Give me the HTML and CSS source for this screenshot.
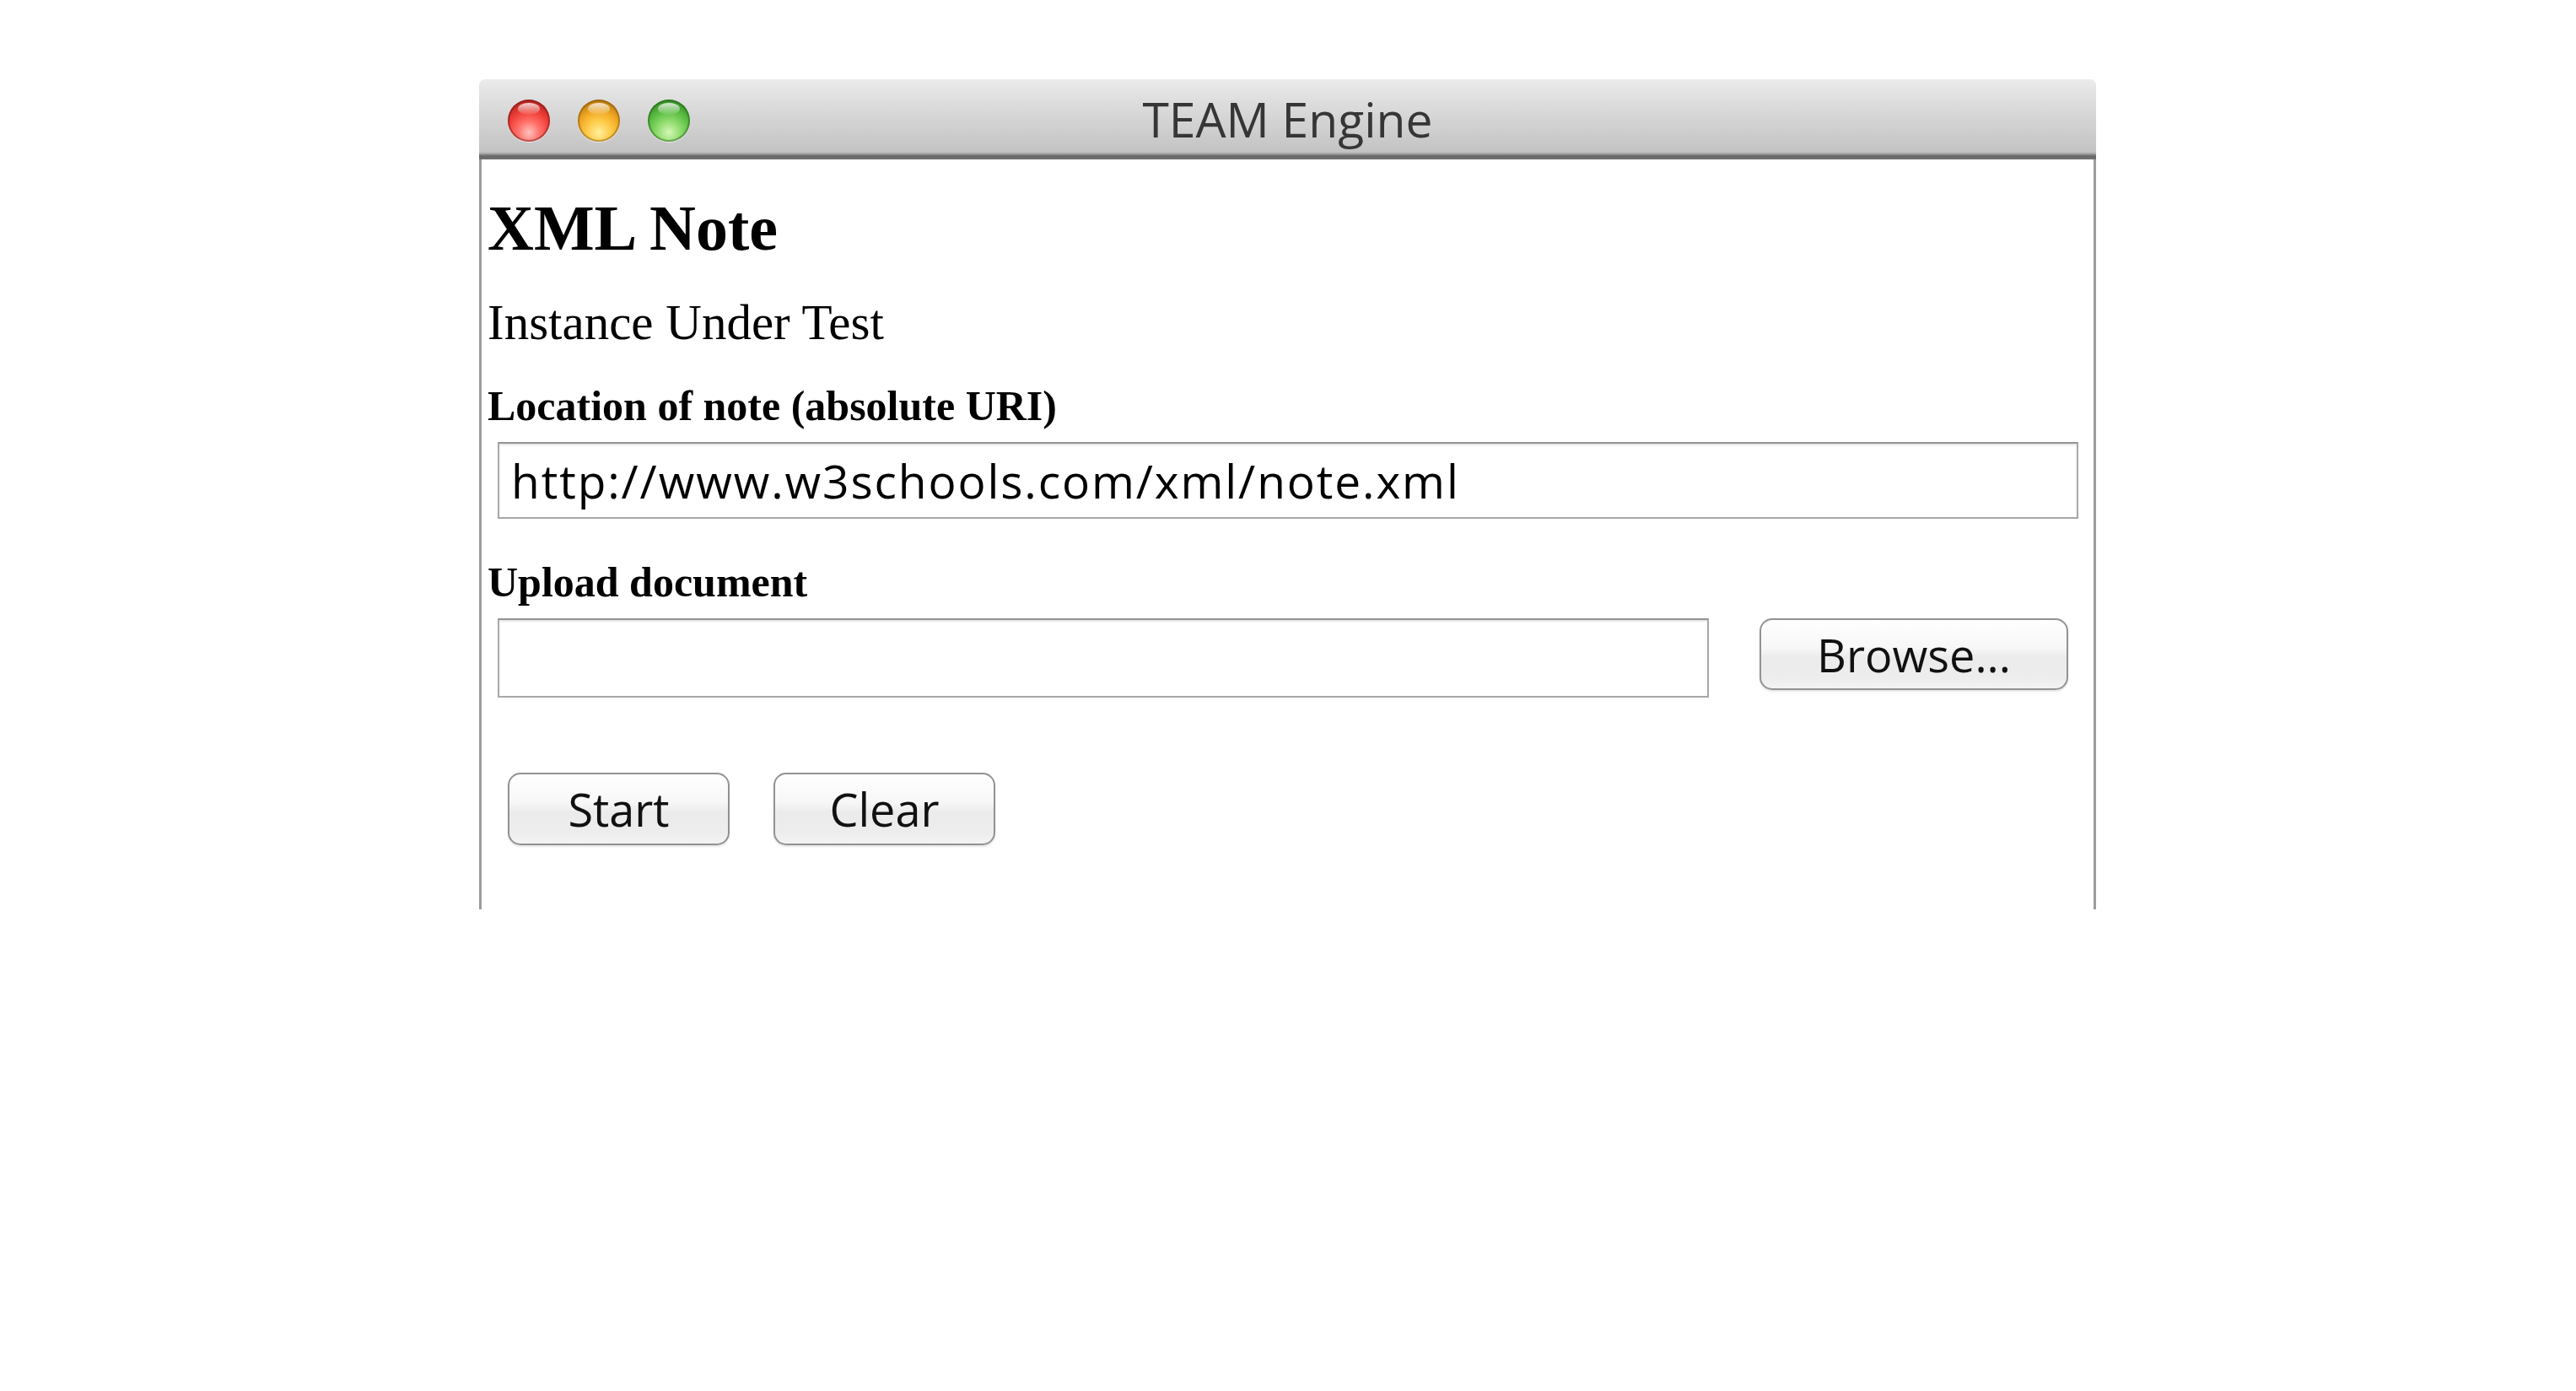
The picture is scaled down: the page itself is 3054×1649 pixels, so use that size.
FILE: index.html
```html
<!DOCTYPE html>
<html lang="en">
<head>
<meta charset="utf-8">
<title>TEAM Engine</title>
<link rel="stylesheet" href="styles.css">
</head>
<body>
<div class="window">
  <div class="titlebar">
    <div class="lights">
      <span class="light red"></span>
      <span class="light yellow"></span>
      <span class="light green"></span>
    </div>
    <div class="title">TEAM Engine</div>
    <div class="spacer"></div>
  </div>
  <div class="content">
    <h1 class="heading">XML Note</h1>
    <p class="subtitle">Instance Under Test</p>
    <form class="form">
      <label class="field-label" for="uri">Location of note (absolute URI)</label>
      <input id="uri" class="text-input uri-input" type="text" value="http://www.w3schools.com/xml/note.xml">
      <label class="field-label upload-label" for="doc">Upload document</label>
      <div class="upload-row">
        <input id="doc" class="text-input doc-input" type="text">
        <button type="button" class="mac-btn browse-btn">Browse...</button>
      </div>
      <div class="actions">
        <button type="button" class="mac-btn action-btn">Start</button>
        <button type="button" class="mac-btn action-btn">Clear</button>
      </div>
    </form>
  </div>
</div>
</body>
</html>
```
FILE: styles.css
```css
html, body {
  margin: 0;
  padding: 0;
  background: #ffffff;
}

body {
  padding: 94px 0 0 568px;
  font-family: "Liberation Serif", "Times New Roman", serif;
  color: #000;
}

.window {
  width: 1917px;
}

.titlebar {
  height: 95px;
  box-sizing: border-box;
  display: grid;
  grid-template-columns: 1fr auto 1fr;
  align-items: center;
  border-radius: 7px 7px 0 0;
  background: linear-gradient(to bottom,
    #ebebeb 0px,
    #dcdcdc 30px,
    #c3c3c3 86px,
    #a8a8a8 88px,
    #929292 89px,
    #676767 91px,
    #727272 95px);
  padding-bottom: 6px;
}

.lights {
  display: flex;
  gap: 33px;
  padding-left: 34px;
  padding-top: 8px;
}

.light {
  position: relative;
  width: 50px;
  height: 50px;
  border-radius: 50%;
  box-sizing: border-box;
}

.light::after {
  content: "";
  position: absolute;
  left: 12px;
  top: 4px;
  width: 26px;
  height: 14px;
  border-radius: 50%;
  background: linear-gradient(to bottom, rgba(255,255,255,0.8), rgba(255,255,255,0.05));
}

.red {
  background: radial-gradient(circle at 50% 78%, #ffc2bf 0%, #ff6d66 30%, #ee3f38 55%, #bb2621 80%, #7e1a17 100%);
  box-shadow: 0 1px 1px rgba(255,255,255,0.6), inset 0 0 0 2px rgba(110,20,20,0.45);
}

.yellow {
  background: radial-gradient(circle at 50% 78%, #ffef9e 0%, #ffcb4a 30%, #f0a823 55%, #c17d0d 80%, #7f5207 100%);
  box-shadow: 0 1px 1px rgba(255,255,255,0.6), inset 0 0 0 2px rgba(120,80,10,0.45);
}

.green {
  background: radial-gradient(circle at 50% 78%, #d5f7b5 0%, #8fdc6e 30%, #5bbd43 55%, #38922a 80%, #225f18 100%);
  box-shadow: 0 1px 1px rgba(255,255,255,0.6), inset 0 0 0 2px rgba(30,90,20,0.45);
}

.title {
  font-family: "Open Sans", "DejaVu Sans", sans-serif;
  font-size: 57px;
  line-height: 1;
  color: #363636;
  padding-top: 6px;
  white-space: nowrap;
}

.content {
  height: 889px;
  box-sizing: border-box;
  border-left: 3px solid #9c9c9c;
  border-right: 3px solid #9c9c9c;
  padding: 43px 18px 0 7px;
}

.heading {
  margin: 0;
  font-size: 76px;
  line-height: 76px;
  font-weight: bold;
}

.subtitle {
  margin: 45px 0 0 0;
  font-size: 59px;
  line-height: 58px;
}

.form {
  display: flex;
  flex-direction: column;
  margin-top: 45px;
}

.field-label {
  font-size: 50px;
  line-height: 50px;
  font-weight: bold;
}

.upload-label {
  margin-top: 50px;
}

.text-input {
  box-sizing: border-box;
  margin: 18px 0 0 12px;
  border: 2px solid #a8a8a8;
  border-top-color: #939393;
  box-shadow: inset 0 2px 2px rgba(0,0,0,0.10);
  background: #fff;
  font-family: "Open Sans", "DejaVu Sans", sans-serif;
  font-size: 55px;
  letter-spacing: 1.9px;
  color: #000;
  padding: 0 0 0 14px;
  outline: none;
}

.uri-input {
  height: 91px;
}

.upload-row {
  display: flex;
  align-items: flex-start;
  margin-top: 18px;
  margin-left: 12px;
  gap: 60px;
}

.doc-input {
  margin: 0;
  width: 1436px;
  height: 94px;
}

.mac-btn {
  box-sizing: border-box;
  height: 86px;
  border: 2px solid #929292;
  border-radius: 15px;
  background: linear-gradient(to bottom, #ffffff 0%, #f7f7f7 40%, #ebebeb 55%, #ededed 85%, #f3f3f3 100%);
  box-shadow: 0 2px 2px rgba(0,0,0,0.10);
  font-family: "Open Sans", "DejaVu Sans", sans-serif;
  font-size: 54px;
  line-height: 1;
  color: #111;
  padding: 0;
  cursor: default;
}

.browse-btn {
  width: 366px;
  height: 85px;
}

.actions {
  display: flex;
  gap: 52px;
  margin-top: 89px;
  margin-left: 24px;
}

.action-btn {
  width: 263px;
}
```
